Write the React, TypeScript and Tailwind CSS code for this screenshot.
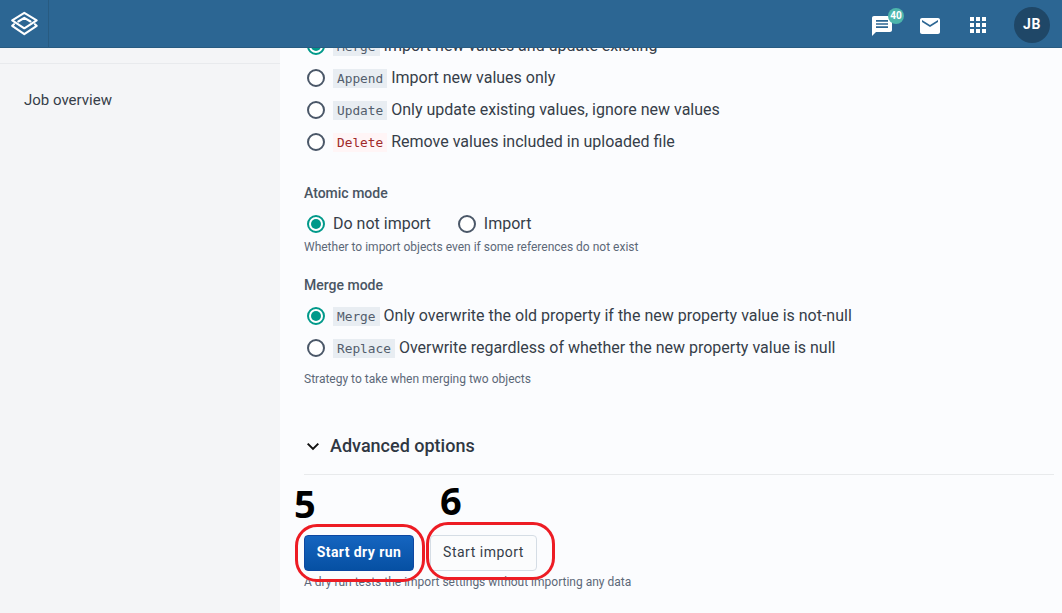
import type { ReactNode } from "react";

function Radio({ checked = false }: { checked?: boolean }) {
  return (
    <svg width="18" height="18" viewBox="0 0 18 18" className="shrink-0">
      <circle cx="9" cy="9" r="8" fill="#fff" stroke={checked ? "#00998a" : "#4a5768"} strokeWidth="2" />
      {checked && <circle cx="9" cy="9" r="5" fill="#00998a" />}
    </svg>
  );
}

function Option({
  code,
  checked,
  danger = false,
  children,
}: {
  code?: string;
  checked?: boolean;
  danger?: boolean;
  children: ReactNode;
}) {
  return (
    <label className="flex h-8 items-center pl-[3px] text-base text-[#363e49]">
      <Radio checked={checked} />
      {code && (
        <code
          className={
            danger
              ? "ml-2 mr-1 mt-px h-[19px] bg-[#fff5f6] px-1 font-['DejaVu_Sans_Mono',monospace] text-[12.8px] leading-[20px] text-[#a02a2a]"
              : "ml-2 mr-1 mt-px h-[19px] bg-[#e8edf2] px-1 font-['DejaVu_Sans_Mono',monospace] text-[12.8px] leading-[20px] text-[#535e6d]"
          }
        >
          {code}
        </code>
      )}
      <span className={code ? "whitespace-nowrap leading-5" : "ml-2 whitespace-nowrap leading-5"}>{children}</span>
    </label>
  );
}

function Header() {
  return (
    <header className="flex h-12 shrink-0 items-center border-b border-[#285b81] bg-[#2c6693]">
      <div className="flex h-full w-[49px] items-center border-r border-[#285b81]">
        <svg width="48" height="47" viewBox="0 0 48 47" fill="none" stroke="#fff" strokeWidth="2.1" strokeLinejoin="round" strokeLinecap="round">
          <path d="M12.2 20.3 L24.3 12.9 L36.7 20.3 L24.3 28.3 Z" />
          <path d="M18.3 21.5 L24.3 17.8 L30.5 21.5" />
          <path d="M14 24.2 L12.2 25.8 L24.3 34.1 L36.7 25.8 L34.9 24.2" />
        </svg>
      </div>
      <div className="ml-auto flex h-full items-start pr-3">
        <div className="relative mr-6 mt-[14px] h-6 w-6">
          <svg width="24" height="24" viewBox="0 0 24 24">
            <path fill="#fff" d="M20 2H4c-1.100 0-2 .9-2 2v18l4-4h14c1.100 0 2-.9 2-2V4c0-1.100-.9-2-2-2z" />
            <path stroke="#2c6693" strokeWidth="1.7" d="M6 6.800h12M6 10h12M6 13.200h12" />
          </svg>
          <span className="absolute left-[18px] top-[-6px] flex h-4 w-4 items-center justify-center rounded-full bg-[#4db6ac] text-[10px] font-bold leading-4 text-white">
            40
          </span>
        </div>
        <svg width="24" height="24" viewBox="0 0 24 24" className="mr-6 mt-[14px]">
          <path fill="#fff" d="M20 4H4c-1.100 0-1.990.9-1.990 2L2 18c0 1.100.9 2 2 2h16c1.100 0 2-.9 2-2V6c0-1.100-.9-2-2-2zm0 4l-8 5-8-5V6l8 5 8-5v2z" />
        </svg>
        <svg width="24" height="24" viewBox="0 0 24 24" fill="#fff" className="mr-6 mt-[13px]">
          <path d="M4 8h4V4H4v4zm6 12h4v-4h-4v4zm-6 0h4v-4H4v4zm0-6h4v-4H4v4zm6 0h4v-4h-4v4zm6-10v4h4V4h-4zm-6 4h4V4h-4v4zm6 6h4v-4h-4v4zm0 6h4v-4h-4v4z" />
        </svg>
        <div className="mt-[7px] flex h-9 w-9 items-center justify-center rounded-full bg-[#1f4767] pb-[2px] text-sm font-bold tracking-[0.6px] text-white">
          JB
        </div>
      </div>
    </header>
  );
}

export default function App() {
  return (
    <div className="flex h-[613px] w-[1062px] flex-col overflow-hidden bg-[#fbfcfd] font-[Roboto,sans-serif]">
      <Header />
      <div className="flex min-h-0 flex-1">
        <aside className="w-[280px] shrink-0 bg-[#f4f5f7]">
          <div className="h-4 border-b border-[#e8eaed]" />
          <nav className="px-6 pt-[26px] text-[15px] leading-5 text-[#363e49]">Job overview</nav>
        </aside>
        <main className="flex min-w-0 flex-1 flex-col overflow-hidden bg-[#fbfcfe] pl-6 pr-[8px]">
          <div className="-mt-[18px] shrink-0">
            <Option code="Merge" checked>Import new values and update existing</Option>
            <Option code="Append">Import new values only</Option>
            <Option code="Update">Only update existing values, ignore new values</Option>
            <Option code="Delete" danger>Remove values included in uploaded file</Option>
          </div>
          <h2 className="mt-[25px] text-sm font-medium leading-5 text-[#4a5563]">Atomic mode</h2>
          <div className="mt-[5px] flex gap-6">
            <Option checked>Do not import</Option>
            <Option>Import</Option>
          </div>
          <p className="text-xs leading-[14px] text-[#5c6878]">
            Whether to import objects even if some references do not exist
          </p>
          <h2 className="mt-[21px] text-sm font-medium leading-5 text-[#4a5563]">Merge mode</h2>
          <div className="mt-[5px]">
            <Option code="Merge" checked>Only overwrite the old property if the new property value is not-null</Option>
            <Option code="Replace">Overwrite regardless of whether the new property value is null</Option>
          </div>
          <p className="mt-2 text-xs leading-[14px] text-[#5c6878]">Strategy to take when merging two objects</p>
          <div className="mt-[48px] flex h-6 items-center text-lg font-medium text-[#2f3742]">
            <svg width="18" height="18" viewBox="0 0 18 18" fill="none" stroke="#111" strokeWidth="2" className="mr-2">
              <path d="M3.700 6.600 L9 11.900 L14.300 6.600" />
            </svg>
            Advanced options
          </div>
          <hr className="mt-4 border-[#e8eaec]" />
          <div className="relative mt-[60px] flex shrink-0 gap-4">
            <button className="h-9 w-[110px] whitespace-nowrap rounded border border-[#0d47a1] bg-linear-to-b from-[#1565c0] to-[#0650a3] pb-[2px] text-sm font-bold tracking-[0.42px] text-white">
              Start dry run
            </button>
            <button className="h-9 w-[107px] whitespace-nowrap rounded border border-[#d5dde5] bg-[#fbfcfd] pb-[2px] text-sm tracking-[0.5px] text-[#363e49]">
              Start import
            </button>
            <span className="absolute left-[-10px] top-[-58px] font-['Open_Sans',sans-serif] text-[38px] font-bold leading-[52px] text-black">5</span>
            <span className="absolute left-[136px] top-[-61px] font-['Open_Sans',sans-serif] text-[38px] font-bold leading-[52px] text-black">6</span>
            <span className="absolute left-[-9px] top-[-11px] z-10 h-[58px] w-[130px] rounded-[22px] border-3 border-[#ed1c24]" />
            <span className="absolute left-[122px] top-[-13px] z-10 h-[58px] w-[129px] rounded-[22px] border-3 border-[#ed1c24]" />
          </div>
          <p className="mt-1 text-xs leading-[14px] text-[#5c6878]">
            A dry run tests the import settings without importing any data
          </p>
        </main>
      </div>
    </div>
  );
}
